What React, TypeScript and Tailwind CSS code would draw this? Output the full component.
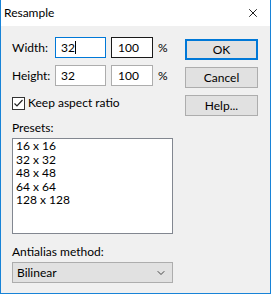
import { FiX, FiChevronDown } from "react-icons/fi";

const presets = ["16 x 16", "32 x 32", "48 x 48", "64 x 64", "128 x 128"];

const font = { fontFamily: 'Lato, "Noto Sans", sans-serif' };

export default function App() {
  return (
    <div
      className="w-[271px] h-[294px] flex flex-col bg-[#f0f0f0] border border-t-0 border-[#1883d7] text-[12px] leading-[14px] text-black"
      style={font}
    >
      {/* title bar */}
      <div className="h-[26px] bg-white flex items-center justify-between pl-[3px] pr-[10px] shrink-0">
        <span className="text-[12px] leading-none">Resample</span>
        <FiX size={14} strokeWidth={1.5} />
      </div>

      <div className="flex pl-[11px] pt-[11px]">
        {/* left column */}
        <div className="w-[161px] flex flex-col">
          <div className="flex items-center h-[21px]">
            <span className="w-[43px]">Width:</span>
            <div className="w-[51px] h-[21px] border border-[#0078d7] bg-white flex items-center pl-[5px]">
              <span>32</span>
              <span className="w-px h-[13px] bg-black"></span>
            </div>
            <div className="w-[42px] h-[21px] border border-[#1a1a1a] bg-white flex items-center pl-[6px] ml-[5px]">
              100
            </div>
            <span className="ml-[5px]">%</span>
          </div>

          <div className="flex items-center h-[21px] mt-[7px]">
            <span className="w-[43px]">Height:</span>
            <div className="w-[51px] h-[21px] border border-[#adadad] bg-white flex items-center pl-[5px]">
              32
            </div>
            <div className="w-[42px] h-[21px] border border-[#adadad] bg-white flex items-center pl-[6px] ml-[5px]">
              100
            </div>
            <span className="ml-[5px]">%</span>
          </div>

          <div className="flex items-center mt-[10px] h-[14px]">
            <div className="w-[13px] h-[13px] border border-[#333] bg-white flex items-center justify-center">
              <svg width="11" height="11" viewBox="0 0 11 11">
                <path d="M1.5 5.5 L4 8 L9.5 2" fill="none" stroke="#222" strokeWidth="1.2" />
              </svg>
            </div>
            <span className="ml-[3px]">Keep aspect ratio</span>
          </div>

          <div className="mt-[11px] h-[14px]">Presets:</div>

          <div className="mt-[3px] h-[96px] border border-[#828790] bg-white pl-[3px]">
            {presets.map((p) => (
              <div key={p} className="h-[13.5px] leading-[13.5px]">
                {p}
              </div>
            ))}
          </div>

          <div className="mt-[11px] h-[14px]">Antialias method:</div>

          <div className="mt-[3px] h-[21px] border border-[#adadad] bg-[#e1e1e1] flex items-center justify-between pl-[4px] pr-[5px]">
            <span>Bilinear</span>
            <FiChevronDown size={12} color="#444" />
          </div>
        </div>

        {/* right column */}
        <div className="flex flex-col ml-[12px] pt-[2px]">
          <button className="w-[73px] h-[21px] border-2 border-[#0078d7] bg-[#e1e1e1] flex items-center justify-center">
            OK
          </button>
          <button className="w-[73px] h-[21px] border border-[#adadad] bg-[#e1e1e1] flex items-center justify-center mt-[7px]">
            Cancel
          </button>
          <button className="w-[73px] h-[21px] border border-[#adadad] bg-[#e1e1e1] flex items-center justify-center mt-[7px]">
            Help...
          </button>
        </div>
      </div>
    </div>
  );
}
